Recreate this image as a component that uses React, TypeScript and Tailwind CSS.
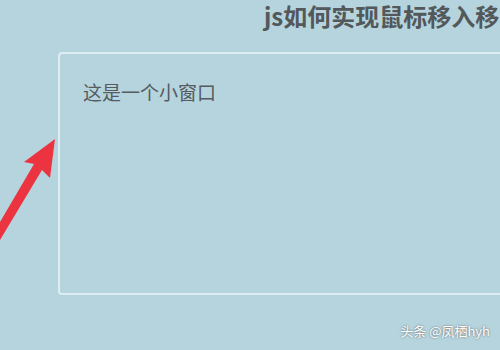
export default function App() {
  return (
    <div
      className="relative w-[500px] h-[350px] overflow-hidden bg-[#b6d4de]"
      style={{ fontFamily: '"Noto Sans CJK SC", "Liberation Sans", sans-serif' }}
    >
      <div className="flex flex-col">
        <h1 className="pl-[264px] h-[52px] whitespace-nowrap text-[24px] leading-[32px] font-bold text-[#53585b]">
          js如何实现鼠标移入移
        </h1>
        <div className="ml-[58px] w-[470px] h-[243px] shrink-0 rounded-[4px] border-2 border-[#deedf2] px-[23px] pt-[24px]">
          <p className="text-[19px] leading-[28px] text-[#555b5e]">这是一个小窗口</p>
        </div>
      </div>

      {/* red arrow pointing at the box */}
      <svg className="absolute left-0 top-0" width="70" height="260" viewBox="0 0 70 260">
        <polygon
          points="55,139 24,162 34,164 0,222 0,240 42,170 50,178"
          fill="#ec3340"
        />
      </svg>

      <div
        className="absolute right-[10px] bottom-[10px] text-[13px] text-white"
        style={{ textShadow: '0 0 2px rgba(0,0,0,0.6)' }}
      >
        头条 @凤栖hyh
      </div>
    </div>
  );
}
